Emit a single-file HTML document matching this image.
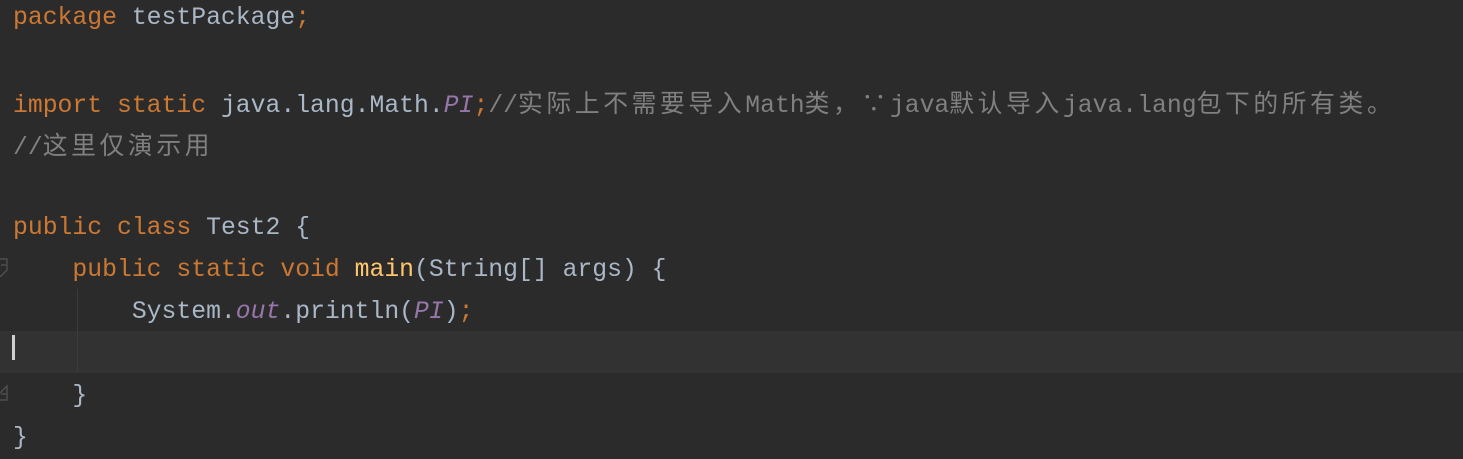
<!DOCTYPE html>
<html><head><meta charset="utf-8"><style>
body{margin:0;width:1463px;height:456px;background:#2b2b2b;overflow:hidden;position:relative;font-family:"Liberation Mono","Noto Sans CJK SC",monospace;font-size:24.75px;color:#a9b7c6}
.l{position:absolute;left:13px;height:42px;line-height:42px;white-space:pre}
.k{color:#cc7832}.c{color:#808080}.p{color:#9876aa;font-style:italic}.m{color:#ffc66d}
.z{font-family:"Noto Sans CJK SC",sans-serif;letter-spacing:3.65px}
#hl{position:absolute;left:0;top:331px;width:1463px;height:42px;background:#323232}
</style></head><body>
<div id="hl"></div>
<div style="position:absolute;left:77px;top:289px;width:1px;height:83px;background:#3b3b3b"></div>
<div style="position:absolute;left:12px;top:335px;width:3px;height:25px;background:#d0d0d0"></div>
<svg style="position:absolute;left:0;top:256px" width="10" height="30"><path d="M0 3H7V14L0 21M1 9H6" stroke="#555" stroke-width="1.2" fill="none"/></svg>
<svg style="position:absolute;left:0;top:380px" width="10" height="30"><path d="M0 13L7 6V20H0M1 14H6" stroke="#555" stroke-width="1.2" fill="none"/></svg>
<div class="l" style="top:-3px"><span class="k">package</span> testPackage<span class="k">;</span></div>
<div class="l" style="top:81px"><span class="k">import static</span> java.lang.Math.<span class="p">PI</span><span class="k">;</span><span class="c">//<span class="z">实际上不需要导入</span>Math<span class="z">类，∵</span>java<span class="z">默认导入</span>java.lang<span class="z">包下的所有类。</span></span></div>
<div class="l c" style="top:123px">//<span class="z">这里仅演示用</span></div>
<div class="l" style="top:207px"><span class="k">public class</span> Test2 {</div>
<div class="l" style="top:249px">    <span class="k">public static void</span> <span class="m">main</span>(String[] args) {</div>
<div class="l" style="top:291px">        System.<span class="p">out</span>.println(<span class="p">PI</span>)<span class="k">;</span></div>
<div class="l" style="top:375px">    }</div>
<div class="l" style="top:417px">}</div>
</body></html>
